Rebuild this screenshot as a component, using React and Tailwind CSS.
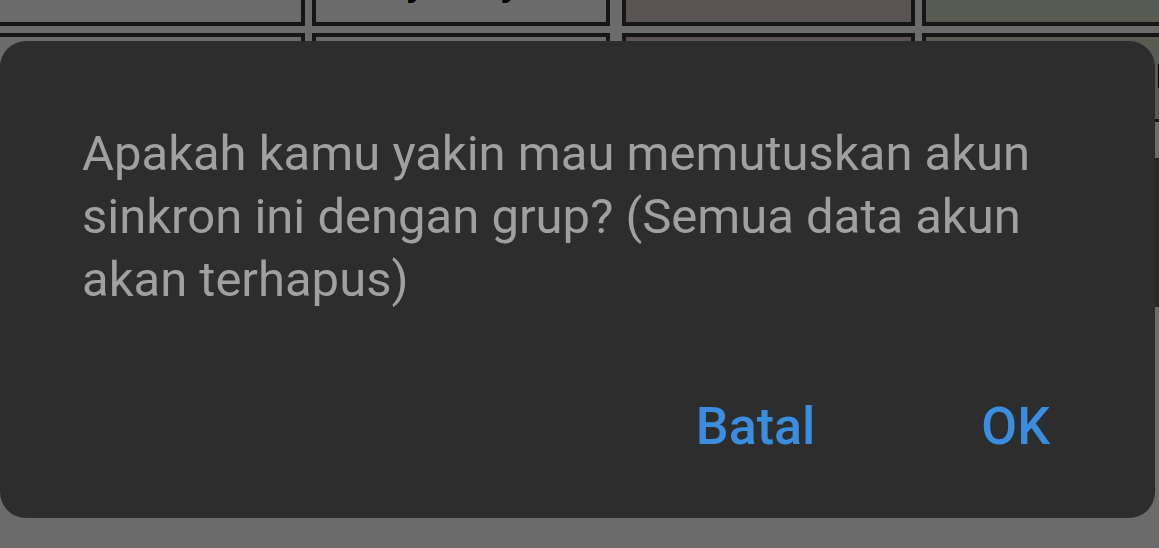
import React from 'react';

const font = { fontFamily: 'Roboto, "Noto Sans", sans-serif' };

function BackgroundGrid() {
  return (
    <div className="flex flex-col">
      {/* baris atas, sebagian besar di luar layar */}
      <div className="flex h-[126px] -mt-[100px]">
        <div className="-ml-[20px] w-[325px] shrink-0 border-4 border-[#161616] bg-[#6b6b6b]" />
        <div className="ml-[7px] w-[298px] shrink-0 border-4 border-[#161616] bg-[#6b6b6b] flex items-end pb-[20px]">
          <div className="w-full flex justify-center gap-[74px] text-[40px] font-bold text-black leading-none pl-[4px]" style={font}>
            <span>y</span>
            <span>y</span>
          </div>
        </div>
        <div className="ml-[12px] w-[293px] shrink-0 border-4 border-[#161616] bg-[#5a5353]" />
        <div className="ml-[7px] w-[300px] shrink-0 border-4 border-[#161616] bg-[#575b52]" />
      </div>

      {/* baris kedua */}
      <div className="flex h-[89px] mt-[7px]">
        <div className="-ml-[20px] w-[325px] shrink-0 border-4 border-[#161616] bg-[#6b6b6b]" />
        <div className="ml-[7px] w-[298px] shrink-0 border-4 border-[#161616] bg-[#6b6b6b]" />
        <div className="ml-[12px] w-[293px] shrink-0 border-4 border-[#161616] bg-[#5a5353]" />
        <div className="ml-[7px] w-[300px] shrink-0 border-x-4 border-t-4 border-b-[3px] border-[#161616] bg-[#575b52] pl-[229px] pt-[14px]">
          <span className="text-[44px] leading-none text-black" style={font}>r</span>
        </div>
      </div>

      {/* baris ketiga */}
      <div className="flex h-[149px] mt-[36px]">
        <div className="ml-[922px] w-[300px] shrink-0 bg-[#2e2424]" />
      </div>
    </div>
  );
}

function ConfirmDialog() {
  return (
    <div
      className="absolute left-0 top-[41px] w-[1155px] h-[477px] rounded-[26px] bg-[#2d2d2d] flex flex-col pt-[81px] pl-[82px] pr-[83px]"
      style={font}
    >
      <p className="text-[49px] leading-[63px] text-[#a0a0a0]">
        Apakah kamu yakin mau memutuskan akun sinkron ini dengan grup? (Semua data akun akan terhapus)
      </p>
      <div className="mt-[86px] flex justify-end gap-[166px] pr-[22px]">
        <button className="text-[52px] leading-[60px] font-medium text-[#3a8ddf]">Batal</button>
        <button className="text-[52px] leading-[60px] font-medium text-[#3a8ddf]">OK</button>
      </div>
    </div>
  );
}

export default function App() {
  return (
    <div className="relative w-full h-[548px] overflow-hidden bg-[#6b6b6b]">
      <BackgroundGrid />
      <ConfirmDialog />
    </div>
  );
}
